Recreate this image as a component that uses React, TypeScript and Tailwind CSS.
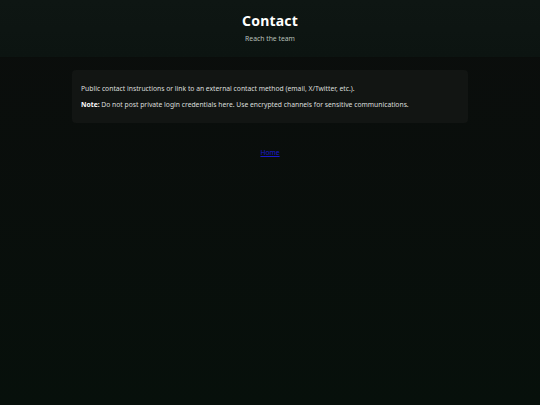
import React from "react";

export default function App() {
  return (
    <div
      className="w-[540px] h-[405px] overflow-hidden bg-gradient-to-b from-[#0b0d0c] to-[#07100b] text-[#e5e7e6]"
      style={{ fontFamily: '"Noto Sans", "Open Sans", sans-serif' }}
    >
      <header className="h-[58px] bg-gradient-to-b from-[#0e1613] to-[#0c1411] flex flex-col items-center pt-[12px] border-b border-[#0a0d0b]">
        <h1 className="text-[14px] leading-[18px] font-bold text-white tracking-[0.2px]">Contact</h1>
        <p className="text-[6.8px] leading-[10px] mt-[4px] text-[#b9c0bc]">Reach the team</p>
      </header>
      <main className="flex flex-col items-center pt-[12px]">
        <section className="w-[396px] h-[53px] rounded-[4px] bg-[#121513] px-[9px] pt-[14px]">
          <p className="text-[6.75px] leading-[10px] text-[#dcdfdd]">
            Public contact instructions or link to an external contact method (email, X/Twitter, etc.).
          </p>
          <p className="text-[6.75px] leading-[10px] mt-[6px] text-[#dcdfdd]">
            <strong className="font-bold text-white">Note:</strong> Do not post private login credentials here. Use encrypted channels for sensitive communications.
          </p>
        </section>
        <a href="#" className="mt-[25px] text-[6.75px] leading-[10px] text-[#1a1acc] underline">
          Home
        </a>
      </main>
    </div>
  );
}
